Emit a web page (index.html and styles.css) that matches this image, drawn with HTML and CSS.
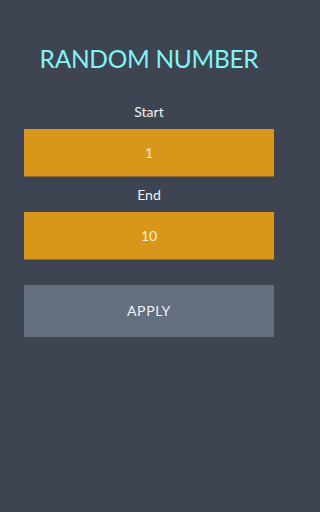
FILE: index.html
```html
<!DOCTYPE html>
<html>
<head>
<meta charset="utf-8">
<link rel="stylesheet" href="styles.css">
</head>
<body>
<div class="app">
  <h1 class="title">RANDOM NUMBER</h1>
  <div class="label">Start</div>
  <div class="field">1</div>
  <div class="label label-end">End</div>
  <div class="field">10</div>
  <div class="apply">APPLY</div>
</div>
</body>
</html>
```
FILE: styles.css
```css
html, body {
  margin: 0;
  padding: 0;
  background: #3e4451;
  height: 100%;
}
.app {
  box-sizing: border-box;
  width: 298px;
  display: flex;
  flex-direction: column;
  padding: 44px 24px 0;
  font-family: Lato, "Open Sans", sans-serif;
}
.title {
  margin: 0;
  height: 30px;
  line-height: 30px;
  font-size: 24.5px;
  font-weight: 400;
  color: #80f4f6;
  text-align: center;
  letter-spacing: -0.3px;
  white-space: nowrap;
}
.label {
  margin-top: 21px;
  height: 34px;
  line-height: 34px;
  text-align: center;
  color: #f2f2f2;
  font-size: 14px;
  font-weight: 400;
}
.label-end {
  margin-top: 0;
  height: 35px;
  line-height: 35px;
}
.field {
  height: 48px;
  line-height: 48px;
  background: #d8971a;
  box-shadow: inset 0 -1px 0 #8a6a3a;
  color: #f8eedc;
  text-align: center;
  font-size: 14px;
  font-weight: 400;
}
.apply {
  margin-top: 25px;
  height: 52px;
  line-height: 52px;
  background: #636e7f;
  color: #f2f2f2;
  text-align: center;
  font-size: 14px;
  font-weight: 400;
  letter-spacing: 0.6px;
}
```
